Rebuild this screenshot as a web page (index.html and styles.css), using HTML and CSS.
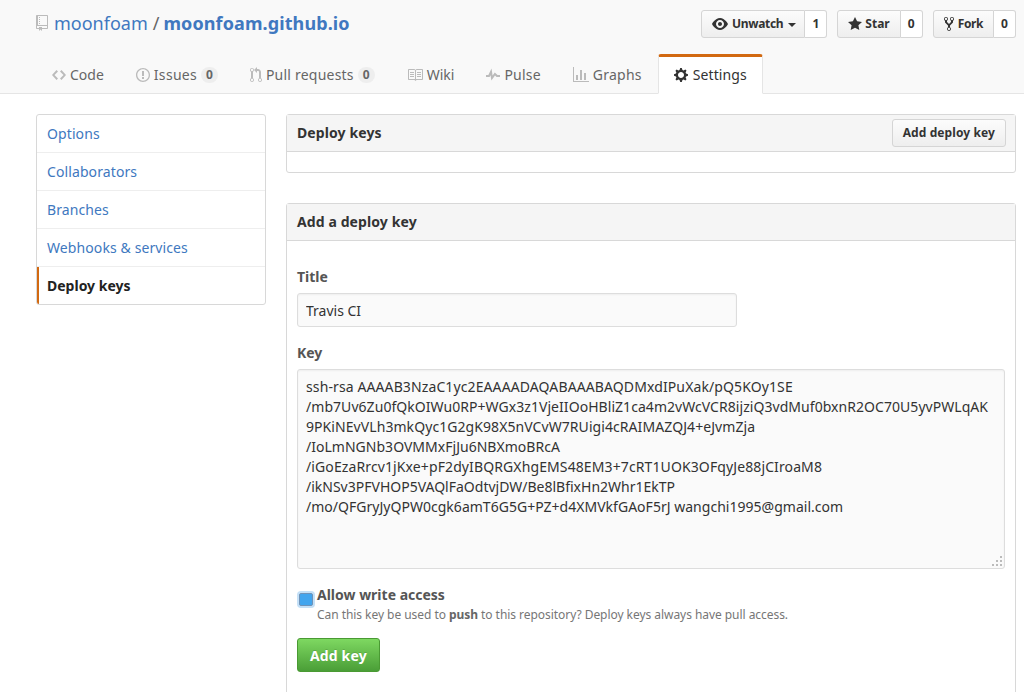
FILE: index.html
```html
<!DOCTYPE html>
<html lang="en">
<head>
<meta charset="utf-8">
<title>Deploy keys</title>
<link rel="stylesheet" href="styles.css">
</head>
<body>
<header class="pagehead">
  <div class="head-top">
    <h1 class="repo-title">
      <svg class="repo-icon" viewBox="0 0 12 16" width="12" height="16"><path d="M4 9H3V8h1v1zm0-3H3v1h1V6zm0-2H3v1h1V4zm0-2H3v1h1V2zm8-1v12c0 .55-.45 1-1 1H6v2l-1.5-1.5L3 16v-2H1c-.55 0-1-.45-1-1V1c0-.55.45-1 1-1h10c.55 0 1 .45 1 1zm-1 10H1v2h2v-1h3v1h5v-2zm0-10H2v9h9V1z"/></svg>
      <a class="owner">moonfoam</a><span class="slash">/</span><a class="repo">moonfoam.github.io</a>
    </h1>
    <div class="actions">
      <div class="action">
        <span class="btn-sm wide-gap tight-a"><svg viewBox="0 0 16 16" width="16" height="16"><path d="M8.06 2C3 2 0 8 0 8s3 6 8.06 6C13 14 16 8 16 8s-3-6-7.94-6zM8 12c-2.2 0-4-1.78-4-4 0-2.2 1.8-4 4-4 2.22 0 4 1.8 4 4 0 2.22-1.78 4-4 4zm2-4c0 1.11-.89 2-2 2-1.11 0-2-.89-2-2 0-1.11.89-2 2-2 1.11 0 2 .89 2 2z"/></svg>Unwatch<i class="caret"></i></span><span class="count">1</span>
      </div>
      <div class="action">
        <span class="btn-sm"><svg viewBox="0 0 14 16" width="14" height="16"><path d="M14 6l-4.9-.64L7 1 4.9 5.36 0 6l3.6 3.26L2.67 14 7 11.67 11.33 14l-.93-4.74L14 6z"/></svg>Star</span><span class="count">0</span>
      </div>
      <div class="action">
        <span class="btn-sm wide-gap tight-b"><svg viewBox="0 0 10 16" width="10" height="16"><path d="M8 1a1.993 1.993 0 0 0-1 3.72V6L5 8 3 6V4.72A1.993 1.993 0 0 0 2 1a1.993 1.993 0 0 0-1 3.72V6.5l3 3v1.78A1.993 1.993 0 0 0 5 15a1.993 1.993 0 0 0 1-3.72V9.5l3-3V4.72A1.993 1.993 0 0 0 8 1zM2 4.2C1.34 4.2.8 3.65.8 3c0-.65.55-1.2 1.2-1.2.65 0 1.2.55 1.2 1.2 0 .65-.55 1.2-1.2 1.2zm3 10c-.66 0-1.2-.55-1.2-1.2 0-.65.55-1.2 1.2-1.2.65 0 1.2.55 1.2 1.2 0 .65-.55 1.2-1.2 1.2zm3-10c-.66 0-1.2-.55-1.2-1.2 0-.65.55-1.2 1.2-1.2.65 0 1.2.55 1.2 1.2 0 .65-.55 1.2-1.2 1.2z"/></svg>Fork</span><span class="count">0</span>
      </div>
    </div>
  </div>
  <nav class="tabs">
    <a class="tab"><svg viewBox="0 0 14 16" width="14" height="16"><path d="M9.5 3L8 4.5 11.5 8 8 11.5 9.5 13 14 8 9.5 3zm-5 0L0 8l4.5 5L6 11.5 2.5 8 6 4.5 4.5 3z"/></svg>Code</a>
    <a class="tab track-3"><svg viewBox="0 0 14 16" width="14" height="16"><path d="M7 2.3c3.14 0 5.7 2.56 5.7 5.7s-2.56 5.7-5.7 5.7A5.71 5.71 0 0 1 1.3 8c0-3.14 2.56-5.7 5.7-5.7zM7 1C3.14 1 0 4.14 0 8s3.14 7 7 7 7-3.14 7-7-3.14-7-7-7zm1 3H6v5h2V4zm0 6H6v2h2v-2z"/></svg>Issues<span class="counter">0</span></a>
    <a class="tab track-2"><svg viewBox="0 0 12 16" width="12" height="16"><path d="M11 11.28V5c-.03-.78-.34-1.47-.94-2.06C9.46 2.35 8.78 2.03 8 2H7V0L4 3l3 3V4h1c.27.02.48.11.69.31.21.2.3.42.31.69v6.28A1.993 1.993 0 0 0 10 15a1.993 1.993 0 0 0 1-3.72zm-1 2.92c-.66 0-1.2-.55-1.2-1.2 0-.65.55-1.2 1.2-1.2.65 0 1.2.55 1.2 1.2 0 .65-.55 1.2-1.2 1.2zM4 3c0-1.11-.89-2-2-2a1.993 1.993 0 0 0-1 3.72v6.56A1.993 1.993 0 0 0 2 15a1.993 1.993 0 0 0 1-3.72V4.72c.59-.34 1-.98 1-1.72zm-.8 10c0 .66-.55 1.2-1.2 1.2-.65 0-1.2-.55-1.2-1.2 0-.65.55-1.2 1.2-1.2.65 0 1.2.55 1.2 1.2zM2 4.2C1.34 4.2.8 3.65.8 3c0-.65.55-1.2 1.2-1.2.65 0 1.2.55 1.2 1.2 0 .65-.55 1.2-1.2 1.2z"/></svg>Pull requests<span class="counter">0</span></a>
    <a class="tab"><svg viewBox="0 0 16 16" width="16" height="16"><path d="M3 5h4v1H3V5zm0 3h4V7H3v1zm0 2h4V9H3v1zm11-5h-4v1h4V5zm0 2h-4v1h4V7zm0 2h-4v1h4V9zm2-6v9c0 .55-.45 1-1 1H9.5l-1 1-1-1H2c-.55 0-1-.45-1-1V3c0-.55.45-1 1-1h5.5l1 1 1-1H15c.55 0 1 .45 1 1zm-8 .5L7.5 3H2v9h6V3.5zm7-.5H9.5l-.5.5V12h6V3z"/></svg>Wiki</a>
    <a class="tab track-2"><svg viewBox="0 0 14 16" width="14" height="16"><path d="M11.5 8L8.8 5.4 6.6 8.5 5.5 1.6 2.38 8H0v2h3.6l.9-1.8.9 5.4L9 8.5l1.6 1.5H14V8z"/></svg>Pulse</a>
    <a class="tab track-2"><svg viewBox="0 0 16 16" width="16" height="16"><path d="M16 14v1H0V0h1v14h15zM5 13H3V8h2v5zm4 0H7V3h2v10zm4 0h-2V6h2v7z"/></svg>Graphs</a>
    <a class="tab selected"><svg viewBox="0 0 14 16" width="14" height="16"><path d="M14 8.77v-1.6l-1.94-.64-.45-1.09.88-1.84-1.13-1.13-1.81.91-1.09-.45-.69-1.92h-1.6l-.63 1.94-1.11.45-1.84-.88-1.13 1.13.91 1.81-.45 1.09L0 7.23v1.59l1.94.64.45 1.09-.88 1.84 1.13 1.13 1.81-.91 1.09.45.69 1.92h1.59l.63-1.94 1.11-.45 1.84.88 1.13-1.13-.92-1.81.47-1.09L14 8.75v.02zM7 11c-1.66 0-3-1.34-3-3s1.34-3 3-3 3 1.34 3 3-1.34 3-3 3z"/></svg>Settings</a>
  </nav>
</header>
<div class="layout">
  <aside class="menu">
    <a class="menu-item">Options</a>
    <a class="menu-item">Collaborators</a>
    <a class="menu-item">Branches</a>
    <a class="menu-item">Webhooks &amp; services</a>
    <a class="menu-item current">Deploy keys</a>
  </aside>
  <main class="content">
    <section class="box keys">
      <div class="box-head">
        <h3>Deploy keys</h3>
        <span class="btn-small">Add deploy key</span>
      </div>
      <div class="box-empty"></div>
    </section>
    <section class="box add">
      <div class="box-head plain"><h3>Add a deploy key</h3></div>
      <form class="box-body">
        <label class="field-label">Title</label>
        <input class="input" type="text" value="Travis CI">
        <label class="field-label key-label">Key</label>
        <div class="textarea" role="textbox" aria-multiline="true">
          <span class="ln ln-a">ssh-rsa AAAAB3NzaC1yc2EAAAADAQABAAABAQDMxdIPuXak/pQ5KOy1SE</span>
          <span class="ln ln-b">/mb7Uv6Zu0fQkOIWu0RP+WGx3z1VjeIIOoHBliZ1ca4m2vWcVCR8ijziQ3vdMuf0bxnR2OC70U5yvPWLqAK</span>
          <span class="ln ln-c">9PKiNEvVLh3mkQyc1G2gK98X5nVCvW7RUigi4cRAIMAZQJ4+eJvmZja</span>
          <span class="ln ln-d">/IoLmNGNb3OVMMxFjJu6NBXmoBRcA</span>
          <span class="ln ln-a">/iGoEzaRrcv1jKxe+pF2dyIBQRGXhgEMS48EM3+7cRT1UOK3OFqyJe88jCIroaM8</span>
          <span class="ln">/ikNSv3PFVHOP5VAQlFaOdtvjDW/Be8lBfixHn2Whr1EkTP</span>
          <span class="ln ln-d">/mo/QFGryJyQPW0cgk6amT6G5G+PZ+d4XMVkfGAoF5rJ wangchi1995@gmail.com</span>
          <svg class="grip" viewBox="0 0 12 12" width="12" height="12"><path d="M9 1h2v2H9zM5 5h2v2H5zM9 5h2v2H9zM1 9h2v2H1zM5 9h2v2H5zM9 9h2v2H9z"/></svg>
        </div>
        <div class="check-row">
          <span class="checkbox"></span>
          <div>
            <div class="check-title">Allow write access</div>
            <div class="check-note">Can this key be used to <b>push</b> to this repository? Deploy keys always have pull access.</div>
          </div>
        </div>
        <span class="btn-primary">Add key</span>
      </form>
    </section>
  </main>
</div>
</body>
</html>
```
FILE: styles.css
```css
* { box-sizing: border-box; }
html, body { margin: 0; height: 692px; overflow: hidden; }
body {
  background: #fff;
  color: #333;
  font: 14px/20px "Noto Sans", sans-serif;
}
h1, h3 { margin: 0; }
svg { fill: currentColor; flex: none; display: block; }

.pagehead {
  height: 94px;
  background: #f9f9f9;
  border-bottom: 1px solid #e5e5e5;
  padding-top: 10px;
}
.head-top {
  display: flex;
  justify-content: space-between;
  padding: 0 8px 0 36px;
  height: 44px;
}
.repo-title {
  display: flex;
  align-items: center;
  height: 26px;
  font-size: 18px;
  font-weight: 400;
  line-height: 26px;
}
.repo-icon { color: #bbb; margin-right: 6px; }
.owner { color: #4078c0; }
.slash { color: #666; margin: 0 4px 0 5px; }
.repo { color: #4078c0; font-weight: 700; letter-spacing: .1px; }

.actions { display: flex; gap: 10px; }
.action { display: flex; height: 28px; font-size: 12px; font-weight: 700; line-height: 26px; }
.btn-sm {
  display: flex;
  align-items: center;
  gap: 3px;
  padding: 0 10px;
  color: #333;
  background: linear-gradient(#fcfcfc, #eee);
  border: 1px solid #d5d5d5;
  border-radius: 3px 0 0 3px;
}
.wide-gap { gap: 4px; }
.tight-a { letter-spacing: -.3px; }
.tight-b { letter-spacing: -.4px; }
.caret {
  width: 0; height: 0;
  margin: 1px -2px 0 1px;
  border: 4px solid transparent;
  border-top-color: #333;
  border-bottom: 0;
}
.count {
  padding: 0 7px;
  color: #333;
  background: #fff;
  border: 1px solid #d5d5d5;
  border-left: 0;
  border-radius: 0 3px 3px 0;
  min-width: 22px;
  text-align: center;
}

.tabs { display: flex; padding-left: 36px; height: 40px; }
.tab {
  display: flex;
  align-items: center;
  gap: 4px;
  height: 40px;
  padding: 0 15px;
  color: #666;
  border: 1px solid transparent;
  border-top-width: 3px;
  border-radius: 3px 3px 0 0;
}
.track-2 { letter-spacing: .22px; }
.track-3 { letter-spacing: .3px; }
.tab svg { color: #bbb; }
.counter {
  padding: 0 5px;
  font-size: 12px;
  font-weight: 700;
  line-height: 16px;
  letter-spacing: 0;
  color: #666;
  background: #eee;
  border-radius: 20px;
}
.selected {
  gap: 5px;
  letter-spacing: .12px;
  color: #333;
  background: #fff;
  border-color: #e5e5e5;
  border-top-color: #d26911;
  border-bottom-color: #fff;
}
.selected svg { color: #333; }

.layout {
  display: flex;
  align-items: flex-start;
  gap: 20px;
  padding: 20px 8px 0 36px;
}
.menu {
  width: 230px;
  flex: none;
  border: 1px solid #d8d8d8;
  border-radius: 3px;
  overflow: hidden;
}
.menu-item {
  display: block;
  height: 38px;
  padding: 9px 10px;
  letter-spacing: .1px;
  color: #4078c0;
  border-bottom: 1px solid #eee;
}
.menu-item.current {
  height: 37px;
  border-bottom: 0;
  border-left: 2px solid #d26911;
  padding-left: 8px;
  letter-spacing: 0;
  color: #222;
  font-weight: 700;
}
.content { flex: 1; min-width: 0; }
.box {
  border: 1px solid #d8d8d8;
  border-radius: 3px;
}
.keys { margin-bottom: 30px; }
.box-head {
  display: flex;
  justify-content: space-between;
  align-items: center;
  height: 37px;
  padding: 0 9px 0 10px;
  background: #f5f5f5;
  border-bottom: 1px solid #d8d8d8;
}
.box-head.plain { height: 37px; }
.box-head h3 { font-size: 14px; font-weight: 700; letter-spacing: .1px; color: #333; }
.btn-small {
  height: 28px;
  padding: 0 10px;
  font-size: 12px;
  font-weight: 700;
  line-height: 26px;
  letter-spacing: .1px;
  color: #333;
  background: linear-gradient(#fcfcfc, #eee);
  border: 1px solid #d5d5d5;
  border-radius: 3px;
}
.box-empty { height: 20px; }
.box-body { padding: 26px 10px 26px; display: block; }
.field-label { display: block; font-weight: 700; color: #555; margin-bottom: 6px; }
.input {
  display: block;
  width: 440px;
  height: 34px;
  padding: 0 8px;
  font: 14px/20px "Noto Sans", sans-serif;
  color: #333;
  background: #fafafa;
  border: 1px solid #ddd;
  border-radius: 3px;
  outline: none;
  box-shadow: inset 0 1px 2px rgba(0,0,0,.05);
}
.key-label { margin-top: 16px; }
.textarea {
  position: relative;
  height: 200px;
  padding: 7px 8px;
  color: #333;
  background: #fafafa;
  border: 1px solid #ddd;
  border-radius: 3px;
  white-space: nowrap;
  overflow: hidden;
  box-shadow: inset 0 1px 2px rgba(0,0,0,.05);
}
.ln { display: block; height: 20px; }
.ln-a { letter-spacing: .11px; }
.ln-b { letter-spacing: .05px; }
.ln-c { letter-spacing: .07px; }
.ln-d { letter-spacing: .02px; }
.grip { position: absolute; right: 1px; bottom: 1px; color: #bbb; }
.check-row { display: flex; gap: 4px; margin-top: 16px; }
.checkbox {
  width: 14px; height: 13px;
  margin: 8px 0 0 2px;
  flex: none;
  background: #42a5ee;
  border: 1px solid #6f93b8;
  border-radius: 2px;
  box-shadow: 0 0 0 2px #c4e0f7;
}
.check-title { font-weight: 700; color: #555; }
.check-note { font-size: 12px; line-height: 20px; letter-spacing: -.05px; color: #767676; }
.check-note b { color: #666; }
.btn-primary {
  display: inline-block;
  margin-top: 13px;
  height: 34px;
  padding: 0 12px;
  font-weight: 700;
  line-height: 34px;
  letter-spacing: .15px;
  color: #fff;
  background: linear-gradient(#7ed861, #4a9e37);
  border: 1px solid #4a9a33;
  border-radius: 3px;
  text-shadow: 0 -1px 0 rgba(0,0,0,.15);
}
```
